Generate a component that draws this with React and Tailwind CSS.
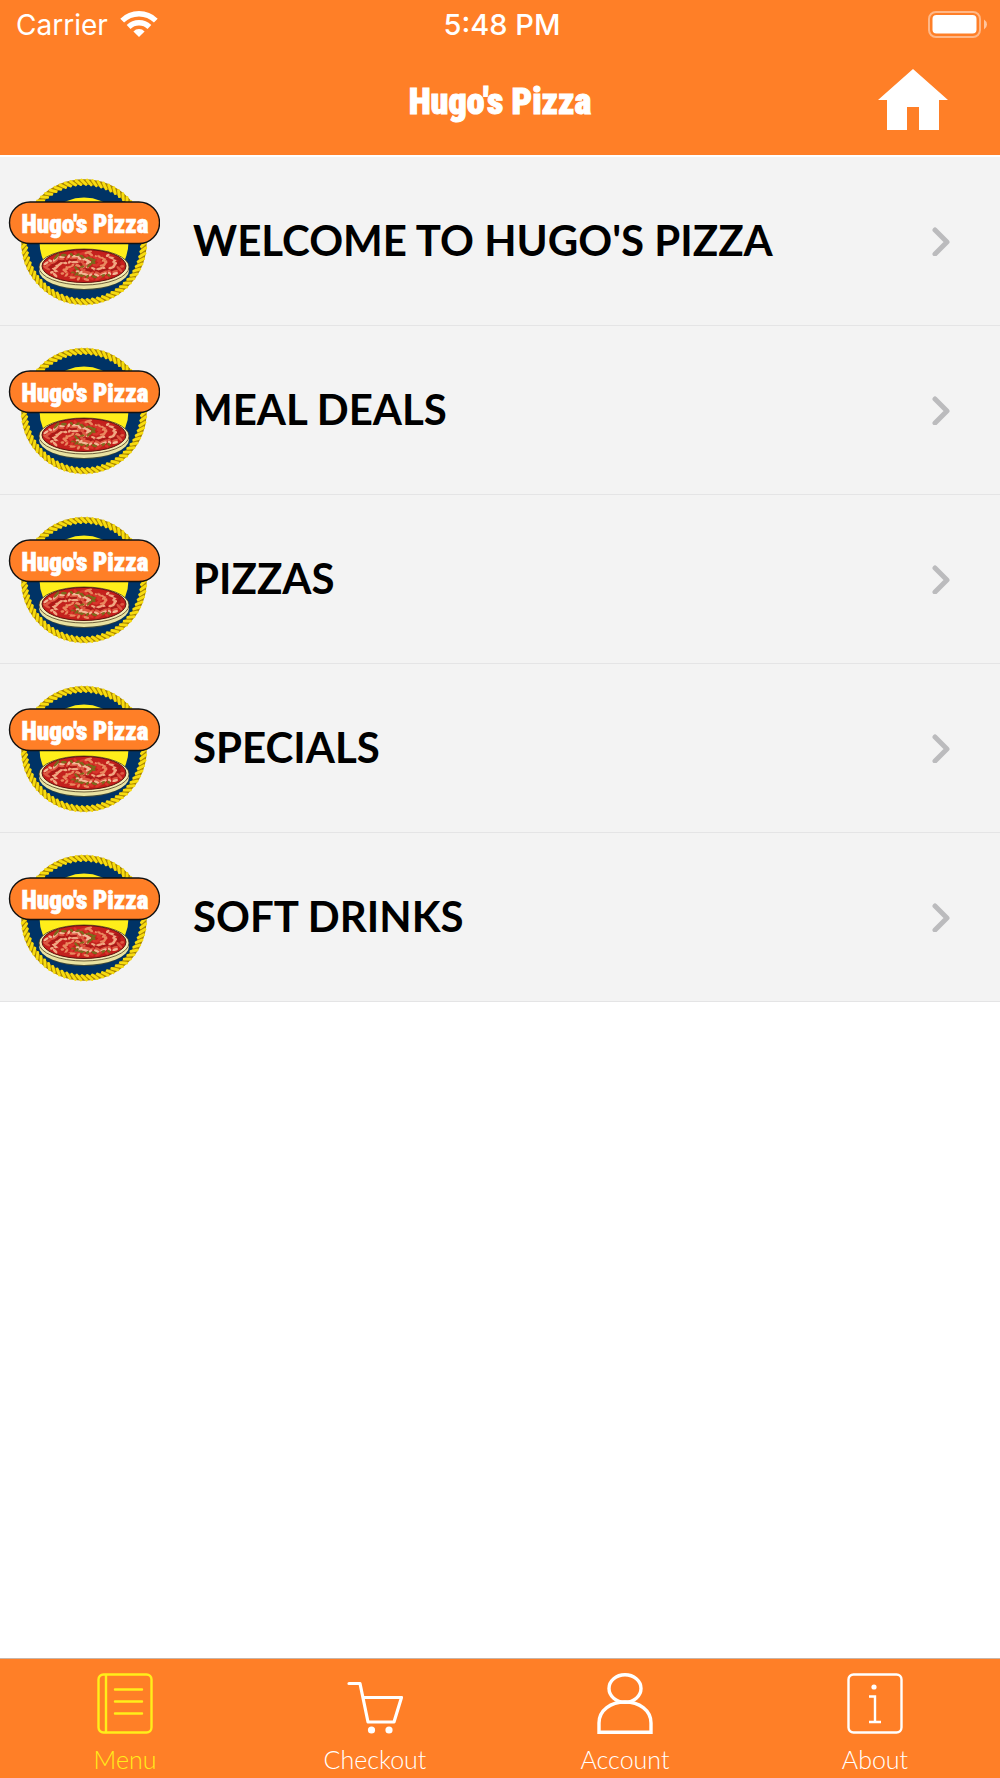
import { useState } from "react";

const categories = [
  { name: "Welcome to Hugo's Pizza", slug: "welcome" },
  { name: "Meal Deals", slug: "meal-deals" },
  { name: "Pizzas", slug: "pizzas" },
  { name: "Specials", slug: "specials" },
  { name: "Soft Drinks", slug: "soft-drinks" },
];

const toppingColors = ["#e9885f", "#c2231f", "#f0a883", "#a81a18", "#dd5a43", "#f3b795", "#7c6a1c", "#d8362c"];

// Spread the toppings over the pizza in a spiral
const toppings = Array.from({ length: 150 }, (_, i) => {
  const angle = i * 2.4;
  const r = Math.sqrt(i / 150);
  return {
    x: 76 + Math.cos(angle) * r * 39,
    y: 90 + Math.sin(angle) * r * 14,
    turn: ((i * 47) % 110) - 60,
    size: 2 + (i % 3),
    color: toppingColors[(i * 5 + (i % 7)) % toppingColors.length],
  };
});

const ropeStrands = Array.from({ length: 70 }, (_, i) => (i * 360) / 70);

const PizzaLogo = () => (
  <svg className="h-[130px] w-[152px] shrink-0" viewBox="0 0 152 130" role="img" aria-label="Hugo's Pizza">
    {/* Rope */}
    <circle cx="76" cy="66" r="60" fill="#003366" stroke="#a88400" strokeWidth="5.5" />
    {ropeStrands.map((turn) => (
      <path key={turn} d="M73.5 4 78 8.5" stroke="#f7dc10" strokeWidth="2.8" strokeLinecap="round" transform={`rotate(${turn} 76 66)`} />
    ))}
    <circle cx="76" cy="66" r="44.5" fill="#ffee1a" />

    {/* Pizza */}
    <ellipse cx="76" cy="96" rx="43" ry="18" fill="#3f4a38" />
    <ellipse cx="76" cy="94.5" rx="45" ry="18.5" fill="#e9e2a0" />
    <ellipse cx="76" cy="91" rx="45" ry="18" fill="#f3ecb5" stroke="#4b3b1d" strokeWidth=".8" />
    <ellipse cx="76" cy="90" rx="42" ry="16.5" fill="#c61f1c" stroke="#5d130d" strokeWidth="1" />
    {toppings.map(({ x, y, turn, size, color }) => (
      <ellipse key={`${x}-${y}`} cx={x} cy={y} rx={size} ry="1.3" fill={color} transform={`rotate(${turn} ${x} ${y})`} />
    ))}

    {/* Name banner */}
    <rect x="1.5" y="26" width="150" height="41.5" rx="20.7" fill="#ff7f27" stroke="#111" strokeWidth="1.4" />
    <text
      x="77"
      y="57"
      textAnchor="middle"
      className="fill-white stroke-white font-['Roboto_Condensed','Roboto',sans-serif] text-[25px] font-black"
      strokeWidth=".6"
    >
      Hugo's Pizza
    </text>
  </svg>
);

const HomeIcon = () => (
  <svg className="h-[61px] w-[70px]" viewBox="0 0 70 61" fill="white" aria-hidden="true">
    <path d="M35 0 70 31H61V61H41V38H29V61H9V31H0z" />
  </svg>
);

const WifiIcon = () => (
  <svg className="h-7 w-[38px]" viewBox="0 0 38 28" fill="none" stroke="white" strokeWidth="5.4" aria-hidden="true">
    <path d="M2.2 9.6a24 24 0 0 1 33.6 0" />
    <path d="M8.6 16a15 15 0 0 1 20.8 0" />
    <path d="M13.4 20.4a8 8 0 0 1 11.2 0L19 26z" fill="white" stroke="none" />
  </svg>
);

const BatteryIcon = () => (
  <svg className="h-7 w-[60px]" viewBox="0 0 60 28" aria-hidden="true">
    <rect x="1" y="1" width="51" height="25" rx="7" fill="none" stroke="white" strokeOpacity=".45" strokeWidth="2" />
    <rect x="4.5" y="4" width="44" height="18.5" rx="4" fill="white" />
    <path d="M56 8.5q3 2 3 5t-3 5z" fill="white" fillOpacity=".55" />
  </svg>
);

const Chevron = () => (
  <svg className="h-[30px] w-[18px]" viewBox="0 0 18 30" fill="none" stroke="#bbbbbd" strokeWidth="5" strokeLinecap="round" strokeLinejoin="round" aria-hidden="true">
    <path d="M3 4 15 16 3 28" />
  </svg>
);

const tabs = [
  {
    name: "Menu",
    icon: (
      <g strokeWidth="2.4">
        <rect x="1.5" y="1.5" width="53" height="58" rx="5" />
        <path d="M9 2v57M18 16.5h27M18 28.5h27M18 40.5h27" strokeLinecap="round" />
      </g>
    ),
  },
  {
    name: "Checkout",
    icon: (
      <g strokeWidth="3.2" strokeLinecap="round" strokeLinejoin="round">
        <path d="M2 10.5h11L21 49h26l7.5-24.5H17" />
        <g fill="currentColor" stroke="none">
          <circle cx="24.5" cy="57" r="3.6" />
          <circle cx="42" cy="57" r="3.6" />
        </g>
      </g>
    ),
  },
  {
    name: "Account",
    icon: (
      <g strokeWidth="3.4">
        <ellipse cx="28" cy="15.5" rx="16" ry="13.7" />
        <path d="M2 59.3V50C2 37 14 29 28 29s26 8 26 21v9.3z" />
      </g>
    ),
  },
  {
    name: "About",
    icon: (
      <g strokeWidth="2.4">
        <rect x="1.5" y="1.5" width="53" height="58" rx="5" />
        <path d="M22 23.5h6V49M22 49h12" />
        <circle cx="27" cy="14" r="2.6" fill="currentColor" stroke="none" />
      </g>
    ),
  },
];

const App = () => {
  const [activeTab, setActiveTab] = useState("Menu");

  return (
    <div className="flex min-h-screen flex-col bg-white">
      <header className="border-b-2 border-white bg-[#ff7f27] text-white">
        {/* Status bar */}
        <div className="grid h-[50px] grid-cols-3 items-center pl-4 pr-3 font-['Inter',sans-serif]">
          <div className="flex items-center gap-3 text-[28px]">
            <span>Carrier</span>
            <WifiIcon />
          </div>
          <span className="text-center text-[29px] font-medium">5:48 PM</span>
          <div className="flex justify-end">
            <BatteryIcon />
          </div>
        </div>

        <div className="grid h-[105px] grid-cols-3">
          <h1 className="col-start-2 self-center whitespace-nowrap pb-0.5 text-center font-['Roboto_Condensed','Roboto',sans-serif] text-4xl font-black [-webkit-text-stroke:1px_white]">
            Hugo's Pizza
          </h1>
          <button className="mr-[52px] self-center justify-self-end pb-1.5" aria-label="Home">
            <HomeIcon />
          </button>
        </div>
      </header>

      <main className="flex-1">
        <ul>
          {categories.map((category) => (
            <li key={category.slug} className="border-b border-[#e4e4e5] bg-[#f3f3f3]">
              <a href={`#${category.slug}`} className="flex h-42 items-center pl-2 pr-[50px]">
                <PizzaLogo />
                <span className="ml-[33px] flex-1 pb-0.5 font-['Lato',sans-serif] text-[42px] font-bold uppercase text-black">
                  {category.name}
                </span>
                <Chevron />
              </a>
            </li>
          ))}
        </ul>
      </main>

      <nav className="sticky bottom-0 grid grid-cols-4 border-t border-[#c9b5a8] bg-[#ff7f27]">
        {tabs.map((tab) => (
          <button
            key={tab.name}
            onClick={() => setActiveTab(tab.name)}
            className={`flex h-[119px] flex-col items-center gap-[11px] pt-3.5 ${
              activeTab === tab.name ? "text-[#ffee1a]" : "text-white"
            }`}
          >
            <svg className="h-[61px] w-14 shrink-0" viewBox="0 0 56 61" fill="none" stroke="currentColor" aria-hidden="true">
              {tab.icon}
            </svg>
            <span className="font-['Lato',sans-serif] text-[25px] leading-7 font-light">{tab.name}</span>
          </button>
        ))}
      </nav>
    </div>
  );
};

export default App;
